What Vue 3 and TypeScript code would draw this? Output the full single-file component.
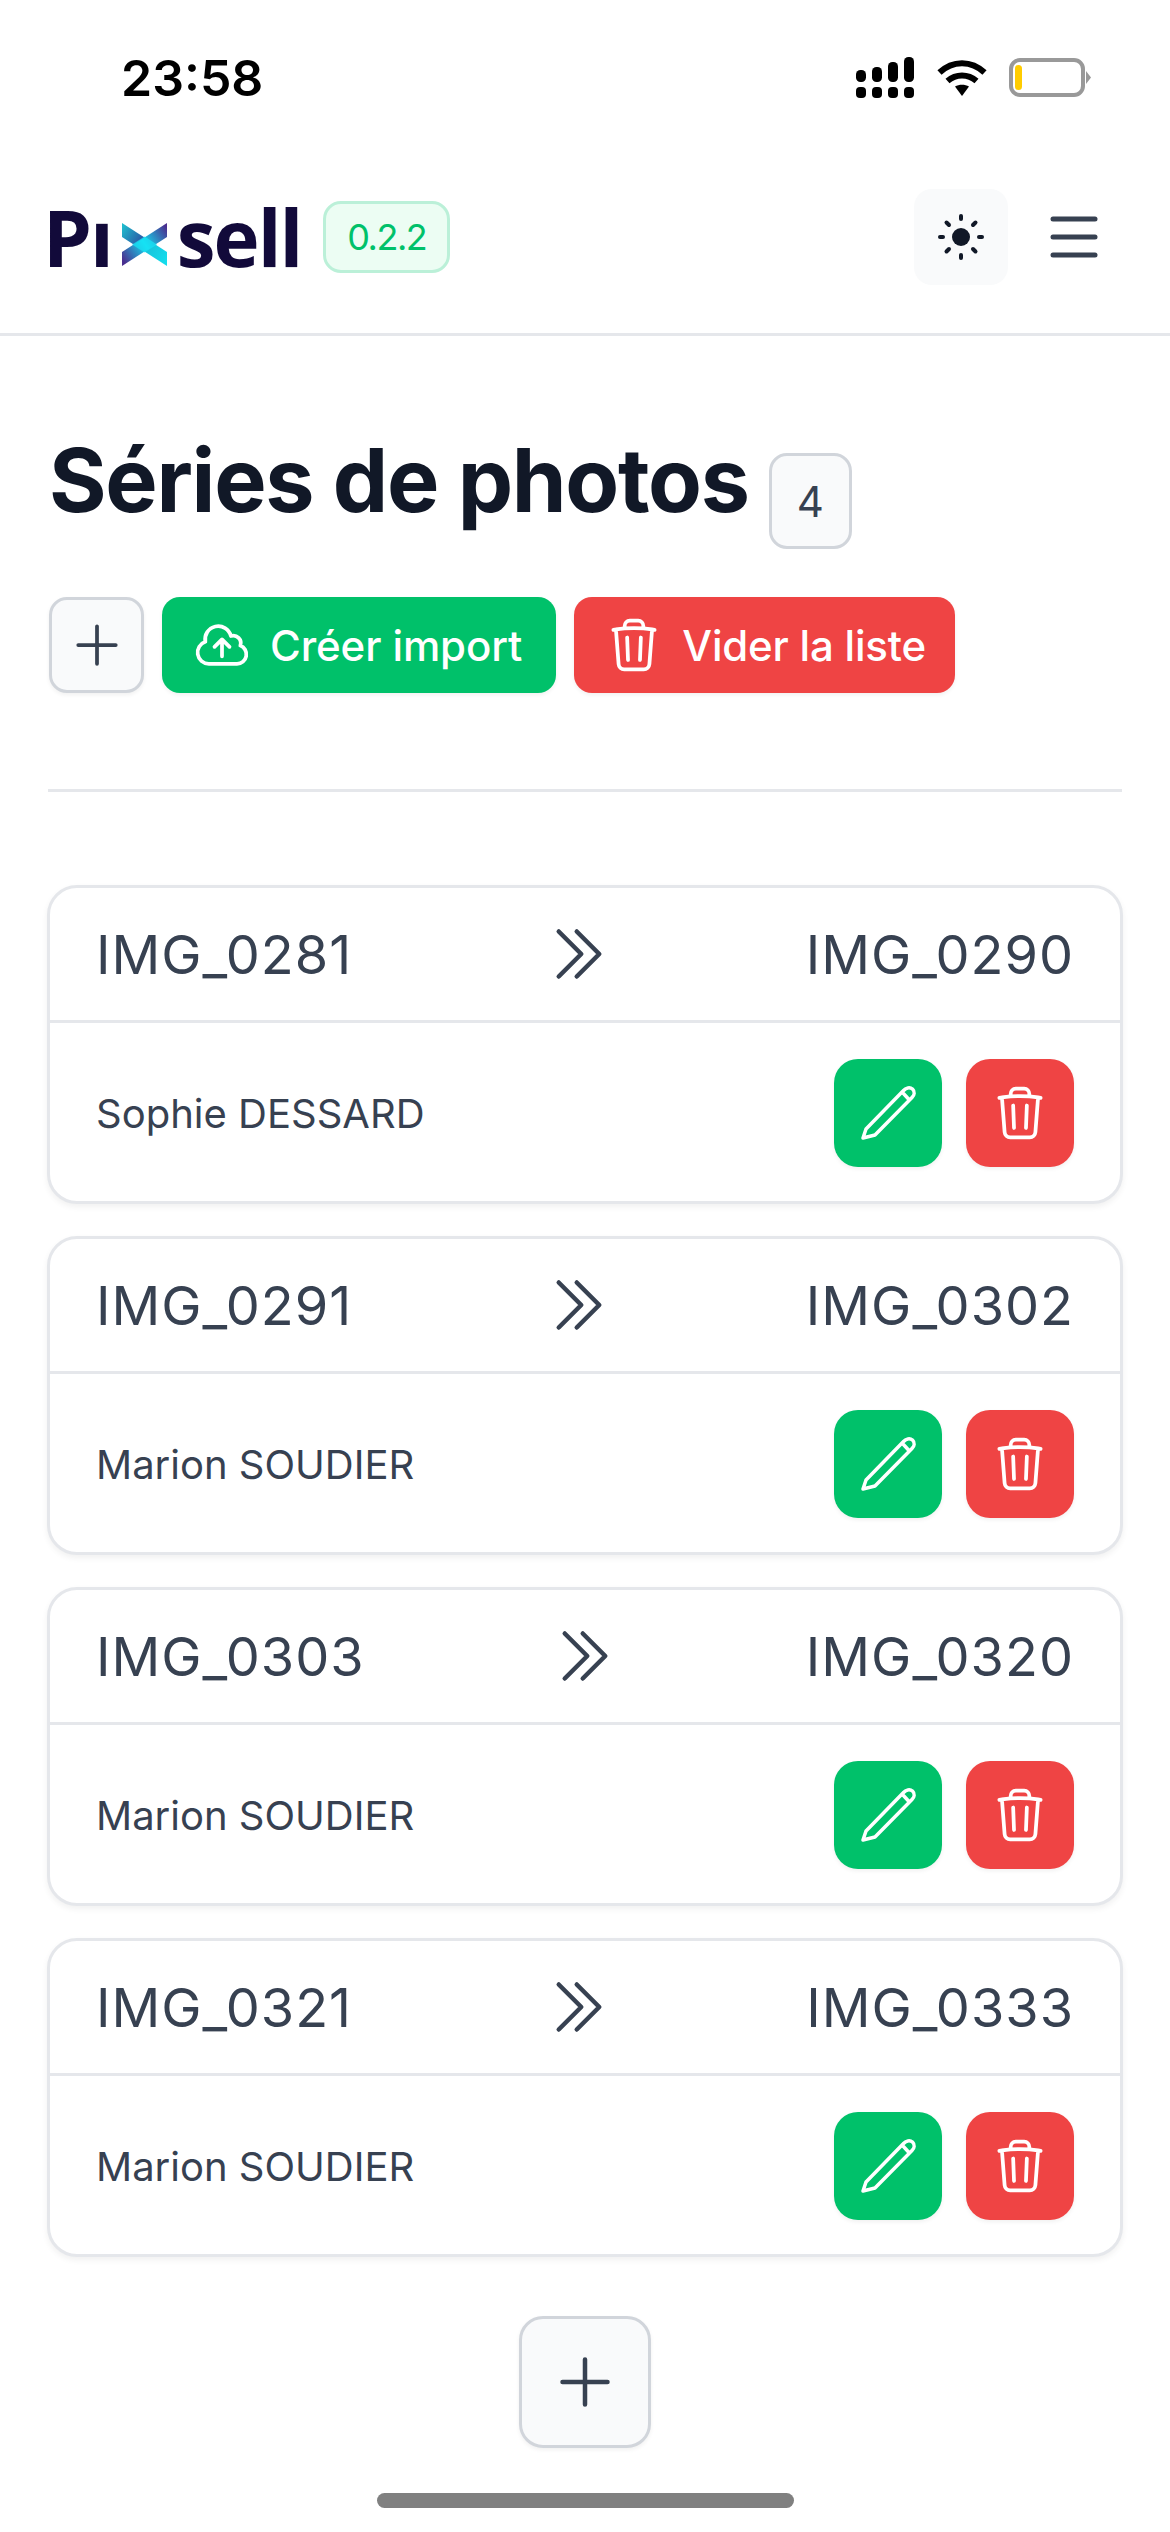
<template>
  <div class="page">
    <!-- status bar -->
    <div class="status">
      <span class="time">23:58</span>
      <div class="status-icons">
        <svg class="signal" width="58" height="41" viewBox="0 0 58 41" fill="#000">
          <rect v-for="b in signalBars" :key="b.x" :x="b.x" :y="b.y" width="10" :height="b.h" rx="4.5" />
          <rect v-for="x in [0, 16, 32, 48]" :key="x" :x="x" y="30" width="10" height="11" rx="4" />
        </svg>
        <svg class="wifi" width="50" height="38" viewBox="0 0 50 38" fill="none" stroke="#000" stroke-width="6">
          <path d="M2.5 13.5C15.5 1 34.500 1 47.500 13.500" />
          <path d="M10.500 22C19 14.500 31 14.500 39.500 22" />
          <path d="M18 27.500C22 25 28 25 32 27.500L25 37Z" fill="#000" stroke="none" />
        </svg>
        <div class="battery"><div class="battery-fill"></div></div>
      </div>
    </div>

    <!-- header -->
    <header class="header">
      <div class="brand">
        <div class="logo">
          <span>Pı</span>
          <svg class="logo-x" width="45" height="44" viewBox="0 0 45 44">
            <defs>
              <linearGradient id="xa" gradientUnits="userSpaceOnUse" x1="0" y1="5" x2="45" y2="36">
                <stop offset="0" stop-color="#1fb9cc" />
                <stop offset="0.4" stop-color="#2b5fa8" />
                <stop offset="0.6" stop-color="#18c4dc" />
                <stop offset="1" stop-color="#14dcec" />
              </linearGradient>
              <linearGradient id="xb" gradientUnits="userSpaceOnUse" x1="45" y1="5" x2="0" y2="36">
                <stop offset="0" stop-color="#4a2f8f" />
                <stop offset="0.5" stop-color="#14d8ee" />
                <stop offset="1" stop-color="#4a2f8f" />
              </linearGradient>
            </defs>
            <path d="M0 0 L45 29 V43 L0 14 Z" fill="url(#xa)" />
            <path d="M45 0 V14 L0 43 V29 Z" fill="url(#xb)" />
            <path d="M22.500 13.500 L35 21.500 L22.500 29.500 L10 21.500 Z" fill="#17e6f6" opacity="0.7" />
          </svg>
          <span>sell</span>
        </div>
        <span class="version">0.2.2</span>
      </div>
      <div class="header-actions">
        <button class="theme-btn">
          <svg width="48" height="48" viewBox="0 0 48 48" fill="#111827">
            <circle cx="24" cy="24" r="9" />
            <g stroke="#111827" stroke-width="4" stroke-linecap="round">
              <line x1="24" y1="3" x2="24" y2="6" />
              <line x1="24" y1="42" x2="24" y2="45" />
              <line x1="3" y1="24" x2="6" y2="24" />
              <line x1="42" y1="24" x2="45" y2="24" />
              <line x1="9.500" y1="9.500" x2="12" y2="12" />
              <line x1="38.500" y1="9.500" x2="36" y2="12" />
              <line x1="9.500" y1="38.500" x2="12" y2="36" />
              <line x1="38.500" y1="38.500" x2="36" y2="36" />
            </g>
          </svg>
        </button>
        <svg class="burger" width="48" height="42" viewBox="0 0 48 42" stroke="#374151" stroke-width="5" stroke-linecap="round">
          <line x1="3" y1="3" x2="45" y2="3" />
          <line x1="3" y1="21" x2="45" y2="21" />
          <line x1="3" y1="39" x2="45" y2="39" />
        </svg>
      </div>
    </header>

    <main class="content">
      <div class="title-row">
        <h1>Séries de photos</h1>
        <span class="count">4</span>
      </div>

      <div class="toolbar">
        <button class="btn btn-neutral btn-square">
          <svg class="ico" width="60" height="60" viewBox="0 0 24 24"><path d="M12 4.500v15m7.500-7.500h-15" /></svg>
        </button>
        <button class="btn btn-green btn-label">
          <svg class="ico" width="60" height="60" viewBox="0 0 24 24"><path :d="cloudPath" /></svg>
          Créer import
        </button>
        <button class="btn btn-red btn-label">
          <svg class="ico" width="60" height="60" viewBox="0 0 24 24"><path :d="trashPath" /></svg>
          Vider la liste
        </button>
      </div>

      <hr class="divider" />

      <div class="series-list">
        <div v-for="s in series" :key="s.from" class="card">
          <div class="card-top">
            <span>{{ s.from }}</span>
            <svg class="ico" width="72" height="72" viewBox="0 0 24 24"><path d="M11.250 4.500l7.500 7.500-7.500 7.500m-6-15l7.500 7.500-7.500 7.500" /></svg>
            <span>{{ s.to }}</span>
          </div>
          <div class="card-bottom">
            <span class="owner">{{ s.owner }}</span>
            <div class="card-actions">
              <button class="btn btn-green btn-icon">
                <svg class="ico pencil" width="60" height="60" viewBox="0 0 60 60"><path :d="pencilPath" /></svg>
              </button>
              <button class="btn btn-red btn-icon">
                <svg class="ico" width="60" height="60" viewBox="0 0 24 24"><path :d="trashPath" /></svg>
              </button>
            </div>
          </div>
        </div>
      </div>

      <div class="add-row">
        <button class="btn btn-neutral btn-add">
          <svg class="ico" width="72" height="72" viewBox="0 0 24 24"><path d="M12 4.500v15m7.500-7.500h-15" /></svg>
        </button>
      </div>
    </main>

    <div class="home-bar"></div>
  </div>
</template>

<script setup lang="ts">
interface Series {
  from: string;
  to: string;
  owner: string;
}

const series: Series[] = [
  { from: 'IMG_0281', to: 'IMG_0290', owner: 'Sophie DESSARD' },
  { from: 'IMG_0291', to: 'IMG_0302', owner: 'Marion SOUDIER' },
  { from: 'IMG_0303', to: 'IMG_0320', owner: 'Marion SOUDIER' },
  { from: 'IMG_0321', to: 'IMG_0333', owner: 'Marion SOUDIER' },
];

const signalBars = [
  { x: 0, y: 13, h: 12 },
  { x: 16, y: 10, h: 15 },
  { x: 32, y: 5, h: 20 },
  { x: 48, y: 0, h: 25 },
];

const cloudPath =
  'M12 16.5V9.75m0 0 3 3m-3-3-3 3M6.75 19.5a4.5 4.5 0 0 1-1.41-8.775 5.25 5.25 0 0 1 10.233-2.33 3 3 0 0 1 3.758 3.848A3.752 3.752 0 0 1 18 19.5H6.75Z';
const trashPath =
  'M14.74 9l-.346 9m-4.788 0L9.26 9m9.968-3.21c.342.052.682.107 1.022.166m-1.022-.165L18.16 19.673a2.25 2.25 0 01-2.244 2.077H8.084a2.25 2.25 0 01-2.244-2.077L4.772 5.79m14.456 0a48.108 48.108 0 00-3.478-.397m-12 .562c.34-.059.68-.114 1.022-.165m0 0a48.11 48.11 0 013.478-.397m7.5 0v-.916c0-1.18-.91-2.164-2.09-2.201a51.964 51.964 0 00-3.32 0c-1.18.037-2.09 1.022-2.09 2.201v.916m7.5 0a48.667 48.667 0 00-7.5 0';
const pencilPath =
  'M5 55L8 46L45 8C48 4.500 52 4 54.500 6C57 8.500 56.500 12 54 14.500L17 52ZM45 10L50.500 16';
</script>

<style>
html,
body {
  margin: 0;
  background: #fff;
}
</style>

<style scoped>
.page {
  position: relative;
  width: 1170px;
  height: 2532px;
  overflow: hidden;
  background: #fff;
  font-family: Inter, "Noto Sans", sans-serif;
  color: #374151;
}

button {
  font-family: inherit;
  border: none;
  padding: 0;
}

.status {
  height: 148px;
  box-sizing: border-box;
  padding: 52px 85px 0 121px;
  display: flex;
  justify-content: space-between;
  align-items: flex-start;
}

.time {
  font-size: 50px;
  line-height: 52px;
  font-weight: 600;
  color: #000;
}

.status-icons {
  display: flex;
  align-items: flex-start;
  padding-top: 5px;
}

.wifi {
  margin: 2px 22px 0 23px;
}

.battery {
  position: relative;
  width: 76px;
  height: 39px;
  margin-top: 1px;
  box-sizing: border-box;
  border: 4px solid #999;
  border-radius: 11px;
}

.battery::after {
  content: "";
  position: absolute;
  right: -10px;
  top: 9px;
  width: 5px;
  height: 13px;
  background: #999;
  clip-path: polygon(0 0, 100% 50%, 0 100%);
}

.battery-fill {
  width: 7px;
  height: 25px;
  margin: 3px 0 0 2px;
  background: #ffcc00;
  border-radius: 4px;
}

.header {
  height: 188px;
  box-sizing: border-box;
  padding: 0 72px 7px 48px;
  border-bottom: 3px solid #e5e7eb;
  display: flex;
  justify-content: space-between;
  align-items: center;
}

.brand {
  display: flex;
  align-items: center;
  gap: 22px;
}

.logo {
  display: flex;
  align-items: flex-end;
  margin-left: -5px;
  font-family: "Open Sans", sans-serif;
  font-size: 78px;
  line-height: 60px;
  font-weight: 700;
  letter-spacing: -2px;
  color: #120a3a;
}

.logo-x {
  margin: 0 10px 0 10px;
}

.version {
  width: 127px;
  height: 72px;
  box-sizing: border-box;
  display: flex;
  align-items: center;
  justify-content: center;
  border: 3px solid #bbf0d8;
  border-radius: 18px;
  background: #ecfdf3;
  color: #00c16a;
  font-size: 36px;
  letter-spacing: -1.5px;
}

.header-actions {
  display: flex;
  align-items: center;
  gap: 42px;
}

.theme-btn {
  width: 94px;
  height: 96px;
  display: flex;
  align-items: center;
  justify-content: center;
  background: #f9fafb;
  border-radius: 18px;
}

.content {
  padding: 0 47px;
}

.title-row {
  display: flex;
  align-items: flex-start;
  gap: 20px;
  padding-top: 94px;
}

h1 {
  margin: 0;
  font-size: 88px;
  line-height: 100px;
  font-weight: 700;
  color: #111827;
  letter-spacing: -1.3px;
  padding-left: 2px;
}

.count {
  width: 83px;
  height: 96px;
  margin-top: 23px;
  box-sizing: border-box;
  display: flex;
  align-items: center;
  justify-content: center;
  background: #f9fafb;
  border: 3px solid #d1d5db;
  border-radius: 18px;
  font-size: 42px;
}

.toolbar {
  display: flex;
  gap: 18px;
  margin-top: 48px;
  padding-left: 2px;
}

.btn {
  display: flex;
  align-items: center;
  justify-content: center;
  box-shadow: 0 2px 4px rgba(0, 0, 0, 0.06);
}

.btn-neutral {
  box-sizing: border-box;
  background: #f9fafb;
  border: 3px solid #d1d5db;
  color: #374151;
}

.btn-green {
  background: #00c16a;
  color: #fff;
}

.btn-red {
  background: #ef4444;
  color: #fff;
}

.btn-square {
  width: 95px;
  height: 96px;
  border-radius: 18px;
}

.btn-label {
  height: 96px;
  box-sizing: border-box;
  padding: 0 31px 0 30px;
  gap: 18px;
  border-radius: 18px;
  font-size: 42px;
  font-weight: 500;
  letter-spacing: -0.1px;
}

.btn-label.btn-green {
  padding-right: 34px;
}

.btn-label.btn-red {
  padding-right: 29px;
  letter-spacing: -0.2px;
}

.ico {
  fill: none;
  stroke: currentColor;
  stroke-width: 1.5;
  stroke-linecap: round;
  stroke-linejoin: round;
  flex: none;
}

.pencil {
  stroke-width: 3.5;
}

.divider {
  margin: 96px 1px 0;
  border: none;
  border-top: 3px solid #e5e7eb;
}

.series-list {
  display: flex;
  flex-direction: column;
  gap: 32px;
  margin-top: 93px;
}

.card {
  height: 319px;
  box-sizing: border-box;
  border: 3px solid #e5e7eb;
  border-radius: 30px;
  box-shadow: 0 3px 6px rgba(0, 0, 0, 0.06);
  background: #fff;
}

.card-top {
  height: 135px;
  box-sizing: border-box;
  padding: 0 46px 0 46px;
  border-bottom: 3px solid #e5e7eb;
  display: flex;
  align-items: center;
  justify-content: space-between;
  font-size: 54px;
  letter-spacing: 1px;
}

.card-bottom {
  height: 178px;
  box-sizing: border-box;
  padding: 2px 46px 0 46px;
  display: flex;
  align-items: center;
  justify-content: space-between;
}

.owner {
  font-size: 40px;
}

.card-actions {
  display: flex;
  gap: 24px;
}

.btn-icon {
  width: 108px;
  height: 108px;
  border-radius: 24px;
}

.add-row {
  display: flex;
  justify-content: center;
  margin-top: 59px;
}

.btn-add {
  width: 132px;
  height: 132px;
  border-radius: 24px;
}

.home-bar {
  position: absolute;
  left: 377px;
  top: 2493px;
  width: 417px;
  height: 15px;
  border-radius: 8px;
  background: #808080;
}
</style>
